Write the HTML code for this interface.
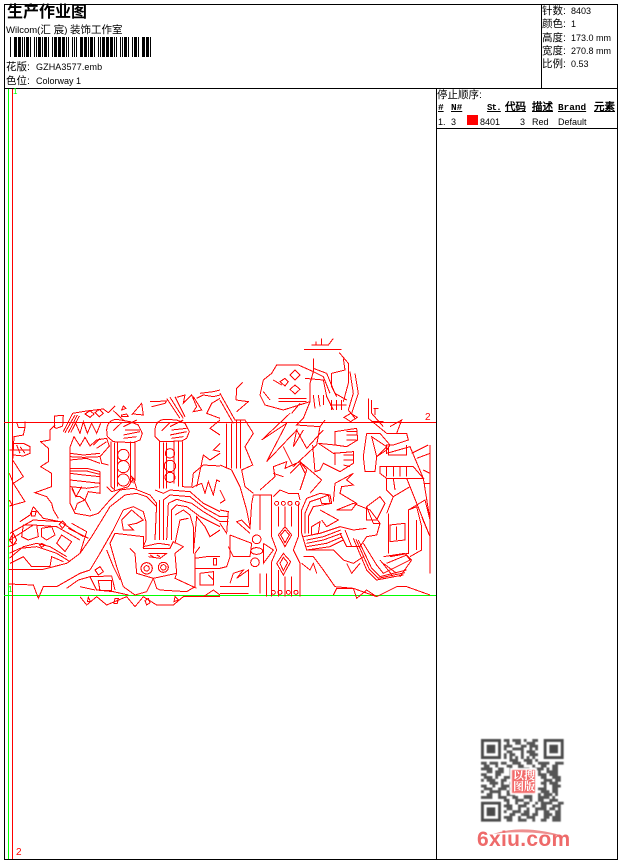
<!DOCTYPE html>
<html lang="zh"><head><meta charset="utf-8"><title>生产作业图</title>
<style>
html,body{margin:0;padding:0;background:#fff;width:620px;height:860px;overflow:hidden}
#p{position:relative;width:620px;height:860px;font:9px "Liberation Sans","WenQuanYi Zen Hei","Noto Sans CJK SC",sans-serif;color:#000}
.l{position:absolute;background:#000}
.t{position:absolute;white-space:nowrap;line-height:12px}
.c{font-size:10.5px}
.h{font:bold 9.4px "Liberation Mono","WenQuanYi Zen Hei",monospace;text-decoration:underline;line-height:12px;position:absolute;white-space:nowrap}
svg{position:absolute;left:0;top:0}
</style></head><body><div id="p">
<div class="l" style="left:4px;top:4px;width:614px;height:1px"></div>
<div class="l" style="left:4px;top:859px;width:614px;height:1px"></div>
<div class="l" style="left:4px;top:4px;width:1px;height:856px"></div>
<div class="l" style="left:617px;top:4px;width:1px;height:856px"></div>
<div class="l" style="left:4px;top:88px;width:614px;height:1px"></div>
<div class="l" style="left:541px;top:4px;width:1px;height:85px"></div>
<div class="l" style="left:436px;top:88px;width:1px;height:772px"></div>
<div class="l" style="left:436px;top:128px;width:182px;height:1px"></div>

<div class="t" style="left:7px;top:4px;font-size:16px;line-height:18px;font-weight:bold">生产作业图</div>
<div class="t" style="left:6px;top:24px;font-size:9.5px">Wilcom(<span class="c">汇 宸</span>) <span class="c">装饰工作室</span></div>
<div class="t" style="left:6px;top:61px"><span class="c">花版:</span></div>
<div class="t" style="left:36px;top:61px;letter-spacing:.1px">GZHA3577.emb</div>
<div class="t" style="left:6px;top:75px"><span class="c">色位:</span></div>
<div class="t" style="left:36px;top:75px">Colorway 1</div>

<div class="t" style="left:542px;top:5px"><span class="c">针数:</span></div><div class="t" style="left:571px;top:5px">8403</div>
<div class="t" style="left:542px;top:18px"><span class="c">颜色:</span></div><div class="t" style="left:571px;top:18px">1</div>
<div class="t" style="left:542px;top:32px"><span class="c">高度:</span></div><div class="t" style="left:571px;top:32px">173.0 mm</div>
<div class="t" style="left:542px;top:45px"><span class="c">宽度:</span></div><div class="t" style="left:571px;top:45px">270.8 mm</div>
<div class="t" style="left:542px;top:58px"><span class="c">比例:</span></div><div class="t" style="left:571px;top:58px">0.53</div>

<div class="t" style="left:437px;top:89px"><span class="c">停止顺序:</span></div>
<div class="h" style="left:438px;top:102px">#</div>
<div class="h" style="left:451px;top:102px">N#</div>
<div class="h" style="left:487px;top:102px;font-size:9px;letter-spacing:-.8px">St.</div>
<div class="h" style="left:505px;top:102px;font-size:10.5px">代码</div>
<div class="h" style="left:532px;top:102px;font-size:10.5px">描述</div>
<div class="h" style="left:558px;top:102px">Brand</div>
<div class="h" style="left:594px;top:102px;font-size:10.5px">元素</div>
<div class="t" style="left:438px;top:116px">1.</div>
<div class="t" style="left:451px;top:116px">3</div>
<div style="position:absolute;left:467px;top:115px;width:11px;height:10px;background:#f00"></div>
<div class="t" style="left:480px;top:116px">8401</div>
<div class="t" style="left:520px;top:116px">3</div>
<div class="t" style="left:532px;top:116px">Red</div>
<div class="t" style="left:558px;top:116px">Default</div>

<div class="t" style="left:13px;top:86px;color:#0f0;font-size:8px">1</div>
<div class="t" style="left:425px;top:412px;color:#f00;font-size:10px">2</div>
<div class="t" style="left:8px;top:584px;color:#0f0;font-size:8px">1</div>
<div class="t" style="left:16px;top:847px;color:#f00;font-size:10px">2</div>

<svg width="620" height="860" viewBox="0 0 620 860" fill="none" shape-rendering="crispEdges">
<path stroke="#000" d="M10.5 37v20M22.5 37v20M24.5 37v20M30.5 37v20M34.5 37v20M36.5 37v20M42.5 37v20M48.5 37v20M52.5 37v20M66.5 37v20M68.5 37v20M72.5 37v20M74.5 37v20M76.5 37v20M88.5 37v20M94.5 37v20M98.5 37v20M100.5 37v20M114.5 37v20M116.5 37v20M120.5 37v20M122.5 37v20M128.5 37v20M132.5 37v20M138.5 37v20M150.5 37v20"/>
<path stroke="#000" stroke-width="3" d="M15.5 37v20M19.5 37v20M27.5 37v20M39.5 37v20M45.5 37v20M55.5 37v20M59.5 37v20M63.5 37v20M81.5 37v20M85.5 37v20M91.5 37v20M103.5 37v20M107.5 37v20M111.5 37v20M125.5 37v20M135.5 37v20M143.5 37v20M147.5 37v20"/>
<path stroke="#0f0" d="M8.5 89V859M4 595.5H436"/>
<path stroke="#f00" d="M12.5 89V859M4 422.5H436"/>

<g stroke="#f00" stroke-width="3" transform="translate(0 340) scale(.33333)">
<path d="M163 262V228L190 226 188 258 170 265ZM190 275 218 220 260 213 310 207 325 218 345 198M195 278 225 225M205 278 232 225M212 278 238 228M225 245 240 280 250 245 262 280 275 250 290 280 302 250M255 222 270 212 282 222 270 232ZM285 218 298 208 310 220 298 230Z"/>
<path d="M50 247 55 262H75V245M75 262 70 285 42 290 38 360 70 410 40 430 75 485 28 498M28 330H90M40 310 70 310 90 320 90 340 70 348 40 345M50 315 60 340M60 320 75 340M28 480 38 498M28 400 40 430"/>
<path d="M165 255 150 270V300L122 305 145 325V365L122 380 155 400V440L105 458 140 470 155 490 160 510 175 535"/>
<path d="M210 320V490L225 520 270 528 295 520 330 480 360 450 400 445 450 465 470 490 465 600M25 688H130L200 670 240 640 275 590 330 500 375 465 410 460 440 470 470 500M270 690 300 640 340 570 370 510 400 500 430 515 438 545V600L430 620 475 610 510 615"/>
<path d="M210 322 222 290 240 318 255 292 270 318 290 300 320 295 328 318 300 350 305 370 325 375M210 340 250 345 300 340M210 350 250 352 300 350M210 360 260 355 300 370M212 385 260 385 300 395M212 393 260 393 300 403M210 400 250 405 300 410M210 420 255 425 300 430M212 440 260 445 295 440M300 395V460L265 455 255 480 240 470H228L215 440M215 445 228 470 245 440M225 510 232 490 255 480 272 512M280 315 300 295M290 325 320 305"/>
<path d="M320 270Q322 240 350 238L390 245 415 255 427 280 420 300 400 308 340 305 322 290ZM340 272 365 248M370 260 410 240M375 270 420 270M370 285 420 275M370 295 410 290M333 305V440L345 450M343 308V445M353 308V440M392 305V430M405 305V420L395 410 400 430"/>
<circle cx="370" cy="345" r="17"/><circle cx="370" cy="380" r="18"/><circle cx="370" cy="420" r="18"/>
<path d="M465 270Q467 240 495 238L530 240 555 250 568 275 560 295 545 303 480 305 465 290ZM485 272 510 248M510 260 550 240M515 270 560 265M510 285 560 275M515 295 550 290M478 305V445M490 308V445M500 308V445M522 305V430M535 305V440M548 305V440L580 442"/>
<circle cx="510" cy="340" r="14"/><circle cx="510" cy="378" r="17"/><circle cx="510" cy="412" r="15"/>
<path d="M450 185 500 183 495 190 455 200M500 175 540 235M510 172 550 235M525 170 555 230M530 172 555 165 550 190 575 165 590 200 580 215 605 210 580 170M600 160 640 155 660 150M590 175 610 165 640 170 660 165M660 175 635 190 620 220 660 235M660 240 630 265 660 285M660 310 640 330 660 335M340 212 370 240M370 198 378 205 365 210ZM395 225 425 190 430 225 400 222M365 230H385L380 222 365 225Z"/>
<path d="M575 442 580 400 610 375 660 378M590 440 610 345 630 360 660 340M580 440 605 430 615 460 625 425 640 465 650 420 660 425"/>
<path d="M465 450 490 460 510 450 570 455 610 490 660 515M490 600V480L510 465 570 470 615 505 660 530M500 600 505 490 530 478 575 490 610 515 660 545M515 600V510L530 495 560 500 600 530 660 560M478 600V480M525 525 550 510 570 525 580 560V640M525 610 540 540 565 535M580 640 590 530 615 560 630 590 660 570M320 440 335 455 385 440 400 415 410 445"/>
<path d="M390 625 405 640 410 700 460 715 530 700 525 640 550 620 520 605 510 625H430V590L345 580 330 610 350 680 370 740 405 765 440 755 460 715M460 715 470 745 480 750 560 755 585 740V640L600 620M530 700 525 715 590 745M365 540 395 510 430 540 410 550 385 555 400 570 370 570 365 540"/>
<circle cx="440" cy="685" r="17"/><circle cx="440" cy="685" r="8"/><circle cx="490" cy="682" r="15"/><circle cx="490" cy="682" r="8"/>
<path d="M445 640H500L480 655 445 650M450 645 460 650M470 645 480 650"/>
<path d="M30 580 100 540 180 545 250 590M30 600 100 555 170 560 240 600M100 500 90 525 60 545M100 500 130 535 180 545M28 655 70 620 110 610 150 620 200 650M28 640 60 625 110 620 170 640 210 665M30 670 70 650 95 680H150L155 650 190 665M25 620 50 610M70 555H110L115 590 85 600 65 590ZM125 565 155 560 165 585 140 600 125 590ZM185 585 215 605 195 635 170 610ZM40 580 50 600 40 615 28 600ZM95 515H108L105 528H95ZM178 553 187 543 197 553 187 565ZM118 615 125 610 135 615 125 622ZM215 550 260 575M205 565 265 595M260 575 240 640"/>
<path d="M25 732 100 735 115 775 130 740H170L240 700 270 690M200 745 235 720 270 710 290 750 340 755 385 765M270 710 335 708 345 750M295 722H335V752H300ZM240 740 285 750M285 690 300 680 310 695 295 705ZM320 630 340 680 360 720"/>
<path d="M240 770 260 795 290 770 320 795 380 770 405 800 430 770 470 795H520L550 770H620L660 770M265 772 272 785 262 785ZM345 775H355L352 790H342ZM435 782 445 775 450 788 440 795ZM525 770 535 780 522 785Z"/>
<path d="M585 685H660M585 655 620 650H660M600 700 640 695V735H600ZM640 655H650V675H640ZM610 770 640 750 660 765M625 705 640 720"/>
</g>

<g stroke="#f00" stroke-width="3" transform="translate(220 330) scale(.33333)">
<path d="M252 58H365M275 45H325L340 25M305 25V45M288 35V47"/>
<path d="M280 85V125L235 105H170L155 130 130 150 120 195 135 225 190 240 270 215V160L280 125M225 120 240 135 225 150 210 135ZM225 165 240 178 225 192 210 178ZM195 145 205 155 195 168 180 155ZM175 205H260M175 215H260M160 150 185 165M130 185 150 210"/>
<path d="M358 68 385 100V160L370 215M370 85 375 120 335 130V170L350 200M390 125 400 190 385 240 405 265M405 130 415 190 395 250M280 115 320 130 345 190 380 210M280 125 310 140 330 190M255 145 310 150 320 200 340 240M280 195 285 235M295 195 300 230M310 195V225M335 210V240M350 210V240M365 210V240M330 225H380M392 250 412 262 392 275 372 262Z"/>
<path d="M210 250 125 330 200 280 140 395 230 300 220 350 250 300M215 250 240 220M270 215 250 265 230 285 300 290 315 270M300 290 290 345 220 410M230 300 260 355 310 300"/>
<path d="M345 305 410 295 413 330 380 350 345 345ZM345 305V345L295 340M380 305H410M380 315H412M380 330H410M295 340 340 370 400 365V400L360 425 310 400 300 420 285 425 278 345M345 370V405M370 375H400M370 390H400M370 405 390 410"/>
<path d="M0 190 45 270H75L100 310 75 350 98 405 65 420 75 470 100 490M0 210 40 280M20 280V415M35 280V415M50 270V415M62 270V415M48 210 50 175 68 157M48 210 85 215 50 245M0 405 35 420 60 470 80 540 90 590"/>
<path d="M120 480 165 440 160 410 200 395 195 415 240 395 260 420 240 480M190 350 220 410M240 395 305 450 270 490M210 430 240 400 255 430M160 430 190 440"/>
<path d="M95 520 100 495H155V600M120 497V600M90 610 50 575 65 570 90 595 95 520M155 495V620L170 660 155 695V800M235 520V620L220 660 240 700V800M175 530V590M195 530V590M215 530V590M175 720V800M195 740V800M215 740V800M120 730V790M140 730V800M195 590 215 615 195 650 175 615ZM195 600 208 615 195 638 182 615ZM190 670 212 695 190 735 170 700ZM190 682 203 698 190 722 180 700Z"/>
<path d="M160 500 180 480 205 490H235L240 510"/>
<circle cx="170" cy="520" r="6"/><circle cx="190" cy="520" r="6"/><circle cx="210" cy="520" r="6"/><circle cx="232" cy="520" r="6"/>
<circle cx="160" cy="787" r="6"/><circle cx="180" cy="787" r="6"/><circle cx="205" cy="787" r="6"/><circle cx="228" cy="787" r="6"/>
<circle cx="110" cy="628" r="13"/><circle cx="105" cy="697" r="13"/><ellipse cx="110" cy="663" rx="18" ry="10"/>
<path d="M30 615V680L20 710 0 715M30 615 95 640 90 680 40 680 25 650M130 640 160 660 130 700V640M0 770H85V720L50 745 70 720 40 730 30 760M0 790H85M0 540 25 545 20 610 0 580M0 560H25M0 575H25M0 480 15 510 0 520"/>
<path d="M245 610V540L260 505 300 490 330 495 335 520 280 530 265 560V610M255 610V550L270 515 300 505M340 515 345 460 400 430 380 450 400 465 365 470 360 490 410 520 395 540H350M300 540 355 570 320 590 305 570M350 540 400 520 450 540 480 580 470 615 440 620 420 650H380M300 505 325 495 330 520 305 520Z"/>
<path d="M250 620 300 610 360 590 400 600 440 595M260 630 310 620 362 600M260 640 310 630 365 610M260 650 320 640 368 620M260 660 330 650 370 630M245 610 260 660H340L370 690 400 700 430 680M275 590 300 575 295 610 275 615ZM360 610 380 650M375 600 395 650"/>
<path d="M250 680H280L310 720 345 770 400 775 470 800 530 770H560L630 795M245 700 270 720 280 700 290 730M400 625 440 720 470 750 550 735M408 628 448 718 475 745 555 728M415 630 455 715 480 740 560 720M430 640 470 705 490 730 570 690 555 670 490 680M380 700 395 730 420 700M340 795 350 775H400L410 805 440 780 470 800"/>
<path d="M510 680 565 670V540L615 510 630 570M505 550V670M510 585 555 580V630L510 635ZM530 590V630M565 540 590 530 605 590V660L570 680M590 570V660M605 560 630 620M630 345V730M500 700 560 675 575 690 540 740M480 690 520 740M490 700 530 730"/>
<path d="M445 205V265L500 310H560L565 330 520 345H500V370L570 350 610 445 630 570M455 210V250L490 290M440 310H480L510 345 500 360 470 380 465 425H435L430 380 440 310M455 320 500 350 470 380ZM480 410H580L610 445H500L480 430ZM500 410V440M520 410V440M540 410V440M560 410V440M505 350V375H560V345M510 290 545 270 530 310M575 370 625 345M590 385 630 370M610 420 630 430M610 460H630M500 445V480L520 500 570 470 560 445M520 445 525 480M500 550 520 500 570 470 630 620M440 530 480 500 495 520 470 570H440V530M440 530 460 580H480M455 275H490M460 235H475M465 235V255"/>
</g>
</svg>

<svg width="620" height="860" viewBox="0 0 620 860" fill="none" style="filter:blur(.5px)">
<g transform="translate(481 739) scale(2.85)">
<path fill="#4a4a4a" d="M0 0h7v7H0zM1 1v5h5V1zM2 2h3v3H2zM22 0h7v7h-7zM23 1v5h5V1zM24 2h3v3h-3zM0 22h7v7H0zM1 23v5h5v-5zM2 24h3v3H2z" fill-rule="evenodd"/>
<path stroke="#555" d="M8 .5h2m1 0h3m1 0h1m2 0h2M9 1.5h1m2 0h2m2 0h3M8 2.5h3m3 0h2m1 0h3M8 3.5h1m2 0h4m2 0h1m1 0h1M9 4.5h2m3 0h1m1 0h3M8 5.5h1m1 0h2m2 0h1m2 0h3M8 6.5h1m1 0h1m1 0h1m1 0h1m1 0h1m1 0h1M10 7.5h3m2 0h3m1 0h1M0 8.5h2m1 0h3m1 0h2m2 0h3m2 0h2m2 0h4m2 0h3M1 9.5h2m2 0h1m3 0h2m2 0h2m3 0h1m2 0h2m2 0h2M0 10.5h4m2 0h2m2 0h1m2 0h4m2 0h3m1 0h1m1 0h2M2 11.5h2m1 0h3m2 0h3m3 0h2m2 0h1m2 0h4M0 12.5h2m3 0h2m3 0h1m9 0h3m1 0h3M1 13.5h3m1 0h1m2 0h3m10 0h2m2 0h3M0 14.5h1m1 0h3m2 0h2m2 0h1m10 0h3m1 0h2M3 15.5h3m1 0h1m2 0h2m9 0h2m1 0h3M0 16.5h2m2 0h1m2 0h3m2 0h1m9 0h1m2 0h3M1 17.5h3m2 0h3m1 0h3m2 0h3m2 0h3m2 0h2M0 18.5h1m2 0h4m2 0h1m2 0h3m1 0h2m3 0h3m1 0h2M2 19.5h2m2 0h1m2 0h3m3 0h3m2 0h1m1 0h3m1 0h1M0 20.5h4m2 0h3m2 0h2m2 0h3m2 0h4m1 0h1M8 21.5h2m2 0h3m2 0h1m2 0h2m2 0h3M9 22.5h1m2 0h1m2 0h2m2 0h1m1 0h4m2 0h2M8 23.5h3m2 0h3m2 0h1m2 0h2m2 0h3M9 24.5h2m2 0h1m2 0h1m2 0h4m1 0h2m1 0h1M8 25.5h1m2 0h3m1 0h2m2 0h1m2 0h2m2 0h2M10 26.5h2m2 0h3m1 0h2m2 0h3m1 0h2M8 27.5h3m2 0h1m2 0h3m3 0h2m1 0h3M9 28.5h2m2 0h3m2 0h1m2 0h2m2 0h3"/>
</g>
<rect x="510" y="768" width="27" height="27" fill="#fff"/>
<rect x="512" y="770" width="23" height="23" fill="#f26a6a"/>
</svg>
<div class="t" style="left:513px;top:770px;font-size:11px;line-height:11px;width:22px;color:#fff;white-space:normal;font-family:'Noto Serif CJK SC',serif;font-weight:bold">以搜<br>图版</div>
<svg width="620" height="860" viewBox="0 0 620 860" fill="none"><path d="M493 834Q525 823 570 838Q530 829 493 834Z" fill="#ee8f8f"/></svg>
<div class="t" style="left:477px;top:829px;font:bold 21px/22px 'Liberation Sans',sans-serif;letter-spacing:.3px;color:#ee6a6a">6xiu.com</div>
</div></body></html>
